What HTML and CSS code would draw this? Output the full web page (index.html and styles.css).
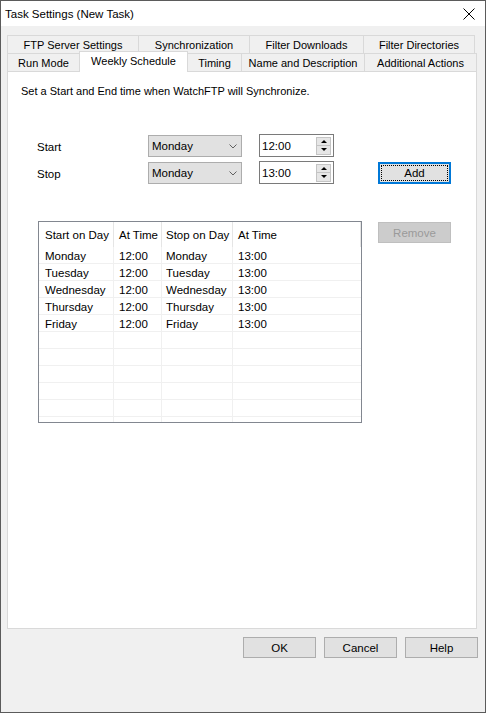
FILE: index.html
```html
<!DOCTYPE html>
<html>
<head>
<meta charset="utf-8">
<title>Task Settings (New Task)</title>
<link rel="stylesheet" href="styles.css">
</head>
<body>
<div class="window">
  <div class="titlebar">
    <span class="title">Task Settings (New Task)</span>
    <svg class="close" width="12" height="12" viewBox="0 0 12 12"><path d="M0.5 0.5 L11.5 11.5 M11.5 0.5 L0.5 11.5" stroke="#000" stroke-width="1" fill="none"/></svg>
  </div>
  <div class="content">
    <div class="tabs">
      <div class="tabrow">
        <div class="tab w-ftp">FTP Server Settings</div>
        <div class="tab w-sync">Synchronization</div>
        <div class="tab w-fdl">Filter Downloads</div>
        <div class="tab w-fdir last">Filter Directories</div>
      </div>
      <div class="tabrow">
        <div class="tab w-run">Run Mode</div>
        <div class="tab w-week active">Weekly Schedule</div>
        <div class="tab w-timing noleft">Timing</div>
        <div class="tab w-name">Name and Description</div>
        <div class="tab w-add last">Additional Actions</div>
      </div>
    </div>
    <div class="panel">
      <p class="desc">Set a Start and End time when WatchFTP will Synchronize.</p>
      <div class="form">
        <div class="frow">
          <span class="lbl">Start</span>
          <div class="combo"><span>Monday</span><svg class="chev" width="8" height="5" viewBox="0 0 8 5"><polyline points="0.5,0.5 4,4 7.5,0.5" fill="none" stroke="#606060" stroke-width="1"/></svg></div>
          <div class="spin"><span>12:00</span><div class="spinbtns"><div class="sb"><i class="tri up"></i></div><div class="sb"><i class="tri down"></i></div></div></div>
        </div>
        <div class="frow">
          <span class="lbl">Stop</span>
          <div class="combo"><span>Monday</span><svg class="chev" width="8" height="5" viewBox="0 0 8 5"><polyline points="0.5,0.5 4,4 7.5,0.5" fill="none" stroke="#606060" stroke-width="1"/></svg></div>
          <div class="spin"><span>13:00</span><div class="spinbtns"><div class="sb"><i class="tri up"></i></div><div class="sb"><i class="tri down"></i></div></div></div>
          <button class="btn add"><span class="focus">Add</span></button>
        </div>
      </div>
      <div class="listarea">
        <div class="list">
          <div class="lrow head"><div class="c c1">Start on Day</div><div class="c c2">At Time</div><div class="c c3">Stop on Day</div><div class="c c4">At Time</div></div>
          <div class="lrow"><div class="c c1">Monday</div><div class="c c2">12:00</div><div class="c c3">Monday</div><div class="c c4">13:00</div></div>
          <div class="lrow"><div class="c c1">Tuesday</div><div class="c c2">12:00</div><div class="c c3">Tuesday</div><div class="c c4">13:00</div></div>
          <div class="lrow"><div class="c c1">Wednesday</div><div class="c c2">12:00</div><div class="c c3">Wednesday</div><div class="c c4">13:00</div></div>
          <div class="lrow"><div class="c c1">Thursday</div><div class="c c2">12:00</div><div class="c c3">Thursday</div><div class="c c4">13:00</div></div>
          <div class="lrow"><div class="c c1">Friday</div><div class="c c2">12:00</div><div class="c c3">Friday</div><div class="c c4">13:00</div></div>
          <div class="lrow"><div class="c c1"></div><div class="c c2"></div><div class="c c3"></div><div class="c c4"></div></div>
          <div class="lrow"><div class="c c1"></div><div class="c c2"></div><div class="c c3"></div><div class="c c4"></div></div>
          <div class="lrow"><div class="c c1"></div><div class="c c2"></div><div class="c c3"></div><div class="c c4"></div></div>
          <div class="lrow"><div class="c c1"></div><div class="c c2"></div><div class="c c3"></div><div class="c c4"></div></div>
          <div class="lrow"><div class="c c1"></div><div class="c c2"></div><div class="c c3"></div><div class="c c4"></div></div>
          <div class="lrow"><div class="c c1"></div><div class="c c2"></div><div class="c c3"></div><div class="c c4"></div></div>
        </div>
        <button class="btn remove" disabled>Remove</button>
      </div>
    </div>
    <div class="buttons">
      <button class="btn">OK</button>
      <button class="btn">Cancel</button>
      <button class="btn">Help</button>
    </div>
  </div>
</div>
</body>
</html>
```
FILE: styles.css
```css
* { box-sizing: border-box; }
html, body { margin: 0; padding: 0; background: #f0f0f0; }
body {
  font-family: "Liberation Sans", Arial, sans-serif;
  font-size: 11px;
  color: #000;
}
.window {
  width: 486px;
  height: 713px;
  border: 1px solid #5b5b5b;
  background: #f0f0f0;
  display: flex;
  flex-direction: column;
  overflow: hidden;
}
.titlebar {
  height: 25px;
  background: #fff;
  display: flex;
  align-items: center;
  justify-content: space-between;
  padding: 0 10px 0 4px;
  flex: none;
}
.title { font-size: 11.5px; padding-top: 1px; }
.close { display: block; }

.content {
  flex: 1;
  padding: 9px 0 0 6px;
  display: flex;
  flex-direction: column;
}
.tabs { display: flex; flex-direction: column; }
.tabrow { display: flex; height: 18px; }
.tab {
  height: 18px;
  border-top: 1px solid #d9d9d9;
  border-left: 1px solid #d9d9d9;
  background: #f0f0f0;
  display: flex;
  align-items: center;
  justify-content: center;
  white-space: nowrap;
  padding-top: 1px;
}
.tab.last { border-right: 1px solid #d9d9d9; }
.tab.noleft { border-left: none; }
.tab.active {
  background: #fff;
  border-right: 1px solid #d9d9d9;
  height: 21px;
  margin-top: -2px;
  align-self: flex-start;
  position: relative;
  z-index: 1;
  padding-top: 0;
  padding-bottom: 2px;
}
.w-ftp { width: 131px; }
.w-sync { width: 111px; }
.w-fdl { width: 114px; }
.w-fdir { width: 112px; }
.w-run { width: 72px; }
.w-week { width: 109px; }
.w-timing { width: 53px; }
.w-name { width: 123px; }
.w-add { width: 113px; }

.panel {
  width: 470px;
  height: 558px;
  background: #fff;
  border: 1px solid #d9d9d9;
  padding: 12px 0 0 13px;
  flex: none;
}
.desc { margin: 0; line-height: 14px; }

.form {
  margin-top: 36px;
  padding-left: 16px;
  display: flex;
  flex-direction: column;
  gap: 4px;
}
.frow { display: flex; align-items: center; height: 23px; }
.lbl { width: 111px; font-size: 11.5px; padding-top: 2px; }
.combo {
  width: 94px;
  height: 22px;
  background: #e1e1e1;
  border: 1px solid #adadad;
  display: flex;
  align-items: center;
  justify-content: space-between;
  padding: 0 4px 0 3px;
  font-size: 11.5px;
}
.combo span { padding-top: 1px; }
.chev { display: block; margin-top: 1px; }
.spin {
  margin-left: 17px;
  width: 75px;
  height: 23px;
  border: 1px solid #7a7a7a;
  background: #fff;
  display: flex;
  align-items: center;
  justify-content: space-between;
  padding: 0 2px 0 2px;
  font-size: 11.5px;
}
.spin span { padding-top: 1px; }
.spinbtns { display: flex; flex-direction: column; gap: 0; width: 15px; }
.sb {
  height: 9px;
  background: #e6e6e6;
  border: 1px solid #c4c4c4;
  display: flex;
  align-items: center;
  justify-content: center;
}
.sb + .sb { border-top: none; height: 9px; }
.tri { display: block; width: 0; height: 0; border-left: 3px solid transparent; border-right: 3px solid transparent; }
.tri.up { border-bottom: 3px solid #000; }
.tri.down { border-top: 3px solid #000; }

.btn {
  font-family: "Liberation Sans", Arial, sans-serif;
  font-size: 11.5px;
  color: #000;
  width: 73px;
  height: 21px;
  background: #e1e1e1;
  border: 1px solid #adadad;
  padding: 0;
  margin: 0;
}
.btn.add {
  margin-left: 44px;
  height: 22px;
  border: 2px solid #0078d7;
  padding: 1px;
}
.btn.add .focus {
  display: flex;
  align-items: center;
  justify-content: center;
  width: 100%;
  height: 100%;
  border: 1px dotted #000;
}
.btn.remove {
  background: #cccccc;
  border-color: #bfbfbf;
  color: #9a9a9a;
  margin-top: 1px;
  margin-left: 16px;
}

.listarea {
  margin-top: 37px;
  padding-left: 17px;
  display: flex;
  align-items: flex-start;
}
.list {
  width: 324px;
  height: 202px;
  border: 1px solid #828790;
  overflow: hidden;
  background: #fff;
}
.lrow { display: flex; height: 17px; border-bottom: 1px solid #f0f0f0; }
.lrow.head { height: 25px; border-bottom: none; }
.c {
  height: 100%;
  border-right: 1px solid #f0f0f0;
  padding-left: 5px;
  padding-top: 2px;
  display: flex;
  align-items: center;
  white-space: nowrap;
  font-size: 11.5px;
}
.head .c { border-right-color: #e5e5e5; padding-top: 1px; }
.c1 { width: 75px; padding-left: 6px; }
.c2 { width: 48px; }
.c3 { width: 71px; padding-left: 4px; }
.c4 { width: 128px; border-right-color: transparent; }
.head .c4 { border-right-color: #e5e5e5; }

.buttons {
  margin-top: 8px;
  padding-right: 7px;
  display: flex;
  justify-content: flex-end;
  gap: 8px;
}
```
